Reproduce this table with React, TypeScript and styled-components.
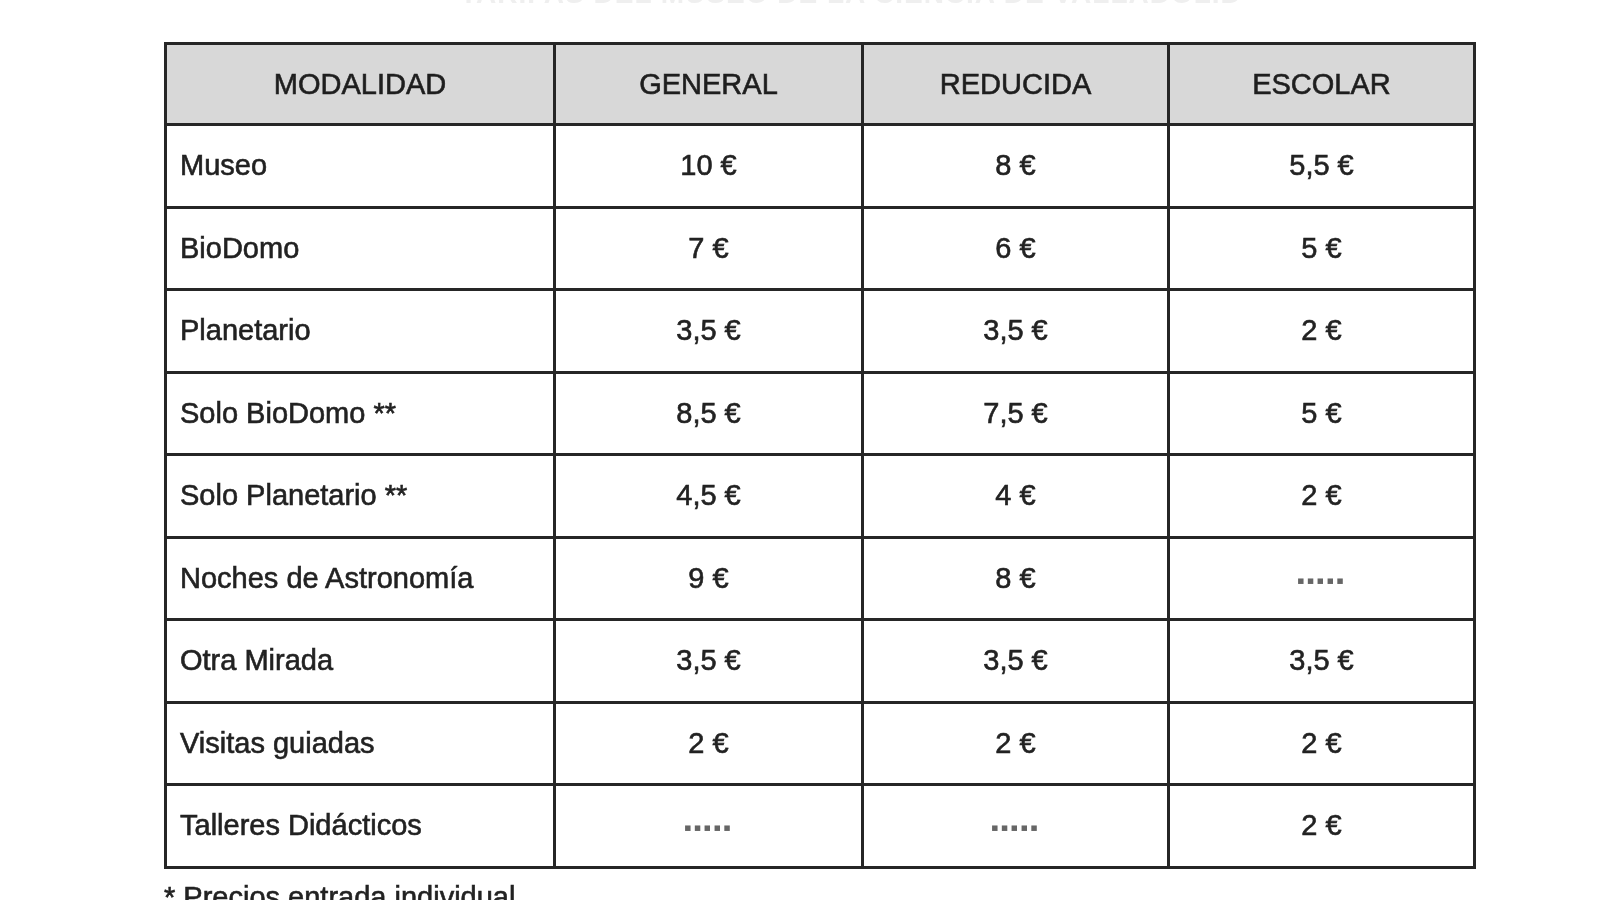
import React from "react";
import styled, { createGlobalStyle } from "styled-components";

const GlobalStyle = createGlobalStyle`
  html, body {
    margin: 0;
    padding: 0;
    background: #ffffff;
    overflow: hidden;
  }
  body {
    font-family: "Liberation Sans", Arial, sans-serif;
  }
`;

const Page = styled.div`
  width: 1600px;
  height: 900px;
  overflow: hidden;
  padding-left: 164px;
  box-sizing: border-box;
  filter: blur(0.55px);
`;

const TitleBox = styled.div`
  height: 42px;
  overflow: hidden;
`;

const Title = styled.h2`
  margin: -22px 0 0 296px;
  font-size: 28px;
  font-weight: bold;
  color: #efefef;
  letter-spacing: 1px;
  white-space: nowrap;
`;

const PriceTable = styled.table`
  border-collapse: collapse;
  width: 1309px;
  table-layout: fixed;
  border: 3px solid #262626;
`;

const HeadCell = styled.th`
  background: #d8d8d8;
  border: 3px solid #262626;
  height: 78px;
  font-size: 29px;
  font-weight: normal;
  color: #1e1e1e;
  text-align: center;
  padding: 0;
  -webkit-text-stroke: 0.6px #1e1e1e;
`;

const Cell = styled.td<{ $first?: boolean }>`
  border: 3px solid #262626;
  height: 79.5px;
  font-size: 29px;
  color: #222;
  padding: 0 0 0 ${(p) => (p.$first ? "13px" : "0")};
  text-align: ${(p) => (p.$first ? "left" : "center")};
  -webkit-text-stroke: 0.6px #222;
`;

const Dashes = styled.span`
  font-size: 22px;
  font-weight: bold;
  color: #666;
  letter-spacing: 2px;
  -webkit-text-stroke: 0;
`;

const Note = styled.p`
  margin: 12px 0 0 0;
  font-size: 29px;
  color: #222;
  -webkit-text-stroke: 0.6px #222;
`;

const rows: [string, string, string, string][] = [
  ["Museo", "10 €", "8 €", "5,5 €"],
  ["BioDomo", "7 €", "6 €", "5 €"],
  ["Planetario", "3,5 €", "3,5 €", "2 €"],
  ["Solo BioDomo **", "8,5 €", "7,5 €", "5 €"],
  ["Solo Planetario **", "4,5 €", "4 €", "2 €"],
  ["Noches de Astronomía", "9 €", "8 €", "-----"],
  ["Otra Mirada", "3,5 €", "3,5 €", "3,5 €"],
  ["Visitas guiadas", "2 €", "2 €", "2 €"],
  ["Talleres Didácticos", "-----", "-----", "2 €"],
];

function Value({ v }: { v: string }) {
  if (v === "-----") return <Dashes>▪▪▪▪▪</Dashes>;
  return <>{v}</>;
}

export default function App() {
  return (
    <>
      <GlobalStyle />
      <Page>
        <TitleBox>
          <Title>TARIFAS DEL MUSEO DE LA CIENCIA DE VALLADOLID</Title>
        </TitleBox>
        <PriceTable>
          <colgroup>
            <col style={{ width: 389 }} />
            <col style={{ width: 308 }} />
            <col style={{ width: 306 }} />
            <col style={{ width: 306 }} />
          </colgroup>
          <thead>
            <tr>
              <HeadCell>MODALIDAD</HeadCell>
              <HeadCell>GENERAL</HeadCell>
              <HeadCell>REDUCIDA</HeadCell>
              <HeadCell>ESCOLAR</HeadCell>
            </tr>
          </thead>
          <tbody>
            {rows.map((r) => (
              <tr key={r[0]}>
                <Cell $first>{r[0]}</Cell>
                <Cell>
                  <Value v={r[1]} />
                </Cell>
                <Cell>
                  <Value v={r[2]} />
                </Cell>
                <Cell>
                  <Value v={r[3]} />
                </Cell>
              </tr>
            ))}
          </tbody>
        </PriceTable>
        <Note>* Precios entrada individual</Note>
      </Page>
    </>
  );
}
